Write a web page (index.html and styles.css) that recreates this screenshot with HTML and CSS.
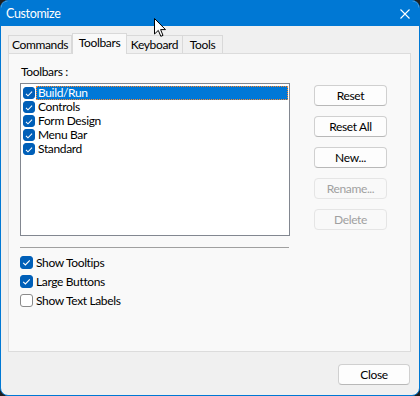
FILE: index.html
```html
<!DOCTYPE html>
<html lang="en">
<head>
  <meta charset="UTF-8">
  <title>Customize</title>
  <link rel="stylesheet" href="styles.css">
</head>
<body>
  <div class="window">
    <div class="titlebar">
      <span class="title">Customize</span>
      <svg class="close-x" width="10" height="10" viewBox="0 0 10 10"><path d="M0.5 0.5 L9.5 9.5 M9.5 0.5 L0.5 9.5" stroke="#fff" stroke-width="1.1" fill="none"/></svg>
    </div>

    <div class="tabs">
      <div class="tab tab-commands">Commands</div>
      <div class="tab tab-toolbars active">Toolbars</div>
      <div class="tab tab-keyboard">Keyboard</div>
      <div class="tab tab-tools">Tools</div>
    </div>

    <div class="panel">
      <div class="left">
        <div class="label">Toolbars :</div>
        <div class="listbox">
          <div class="item"><span class="check on"><svg viewBox="0 0 13 13"><path d="M3.2 6.8 L5.4 9 L9.8 4.4"/></svg></span><span class="text selected">Build/Run</span></div>
          <div class="item"><span class="check on"><svg viewBox="0 0 13 13"><path d="M3.2 6.8 L5.4 9 L9.8 4.4"/></svg></span><span class="text">Controls</span></div>
          <div class="item"><span class="check on"><svg viewBox="0 0 13 13"><path d="M3.2 6.8 L5.4 9 L9.8 4.4"/></svg></span><span class="text">Form Design</span></div>
          <div class="item"><span class="check on"><svg viewBox="0 0 13 13"><path d="M3.2 6.8 L5.4 9 L9.8 4.4"/></svg></span><span class="text">Menu Bar</span></div>
          <div class="item"><span class="check on"><svg viewBox="0 0 13 13"><path d="M3.2 6.8 L5.4 9 L9.8 4.4"/></svg></span><span class="text">Standard</span></div>
        </div>
        <div class="separator"></div>
        <div class="option"><span class="check on"><svg viewBox="0 0 13 13"><path d="M3.2 6.8 L5.4 9 L9.8 4.4"/></svg></span>Show Tooltips</div>
        <div class="option"><span class="check on"><svg viewBox="0 0 13 13"><path d="M3.2 6.8 L5.4 9 L9.8 4.4"/></svg></span>Large Buttons</div>
        <div class="option"><span class="check"></span>Show Text Labels</div>
      </div>

      <div class="right">
        <button class="btn">Reset</button>
        <button class="btn">Reset All</button>
        <button class="btn">New...</button>
        <button class="btn" disabled>Rename...</button>
        <button class="btn" disabled>Delete</button>
      </div>
    </div>

    <div class="footer">
      <button class="btn close-btn">Close</button>
    </div>

    <svg class="cursor" width="13" height="20" viewBox="0 0 13 20"><path d="M0.5 0.5 L0.5 16 L4.3 12.4 L6.8 18.3 L9 17.4 L6.6 11.6 L11.5 11.6 Z" fill="#fff" stroke="#000" stroke-width="1" stroke-linejoin="round"/></svg>
  </div>
</body>
</html>
```

FILE: styles.css
```css
body {
  margin: 0;
  background: #1f1f1f;
  font-family: "Lato", "Liberation Sans", Arial, sans-serif;
  font-size: 12px;
  letter-spacing: -0.35px;
  color: #000;
}
.window {
  position: relative;
  width: 420px;
  height: 396px;
  box-sizing: border-box;
  border: 1px solid #0078d4;
  border-radius: 8px;
  background: #f0f0f0;
  overflow: hidden;
  display: flex;
  flex-direction: column;
}
.titlebar {
  height: 25px;
  flex: none;
  background: #0078d4;
  display: flex;
  align-items: center;
  padding: 0 9px 0 5px;
  margin-top: -1px;
  padding-top: 1px;
}
.title {
  color: #fff;
  font-size: 12.5px;
  flex: 1;
}
.tabs {
  display: flex;
  align-items: flex-end;
  height: 20px;
  margin-top: 7px;
  padding-left: 7px;
  flex: none;
}
.tab {
  height: 18px;
  box-sizing: border-box;
  border: 1px solid #d9d9d9;
  border-bottom: none;
  background: #f0f0f0;
  display: flex;
  align-items: center;
  justify-content: center;
  line-height: 14px;
}
.tab-commands { width: 64px; }
.tab-toolbars { width: 55px; }
.tab-keyboard { width: 56px; border-left: none; }
.tab-tools { width: 40px; border-left: none; }
.tab.active {
  height: 21px;
  margin-bottom: -1px;
  background: #f9f9f9;
  position: relative;
  z-index: 1;
  padding-bottom: 2px;
}
.panel {
  width: 403px;
  height: 299px;
  box-sizing: border-box;
  margin-left: 7px;
  border: 1px solid #dcdcdc;
  background: #f9f9f9;
  display: flex;
  flex: none;
}
.left {
  width: 270px;
  padding: 11px 0 0 11px;
}
.label {
  line-height: 14px;
  padding-left: 1px;
  margin-bottom: 4px;
}
.listbox {
  width: 270px;
  height: 153px;
  box-sizing: border-box;
  border: 1px solid #828790;
  background: #fff;
  padding: 2px 1px 0 2px;
}
.item {
  display: flex;
  align-items: center;
  height: 14px;
}
.item .text {
  flex: 1;
  height: 14px;
  line-height: 14px;
  padding-left: 2px;
  margin-left: 1px;
  box-sizing: border-box;
}
.item .text.selected {
  background: #0078d7;
  color: #fff;
  outline: 1px dotted #ff8728;
  outline-offset: -1px;
}
.check {
  width: 13px;
  height: 13px;
  box-sizing: border-box;
  border: 1px solid #8a8a8a;
  border-radius: 3px;
  background: #fff;
  display: inline-flex;
  flex: none;
}
.check.on {
  background: #005fb8;
  border-color: #005fb8;
}
.check svg {
  width: 13px;
  height: 13px;
  margin: -1px;
}
.check svg path {
  fill: none;
  stroke: #fff;
  stroke-width: 1.1;
}
.item .check {
  width: 12px;
  height: 12px;
}
.separator {
  height: 1px;
  width: 269px;
  background: #a0a0a0;
  margin: 11px 0 5px;
}
.option {
  display: flex;
  align-items: center;
  height: 19px;
  gap: 3px;
}
.right {
  display: flex;
  flex-direction: column;
  gap: 10px;
  padding: 31px 0 0 24px;
}
.btn {
  width: 73px;
  height: 21px;
  box-sizing: border-box;
  border: 1px solid #d0d0d0;
  border-bottom-color: #b8b8b8;
  border-radius: 4px;
  background: #fdfdfd;
  font-family: inherit;
  font-size: 12px;
  letter-spacing: inherit;
  color: #000;
  padding: 0;
}
.btn:disabled {
  color: #a0a0a0;
  border-color: #e5e5e5;
  background: #f9f9f9;
}
.footer {
  display: flex;
  justify-content: flex-end;
  padding: 12px 9px 0 0;
}
.close-btn {
  width: 72px;
}
.cursor {
  position: absolute;
  left: 153px;
  top: 17px;
}
```
